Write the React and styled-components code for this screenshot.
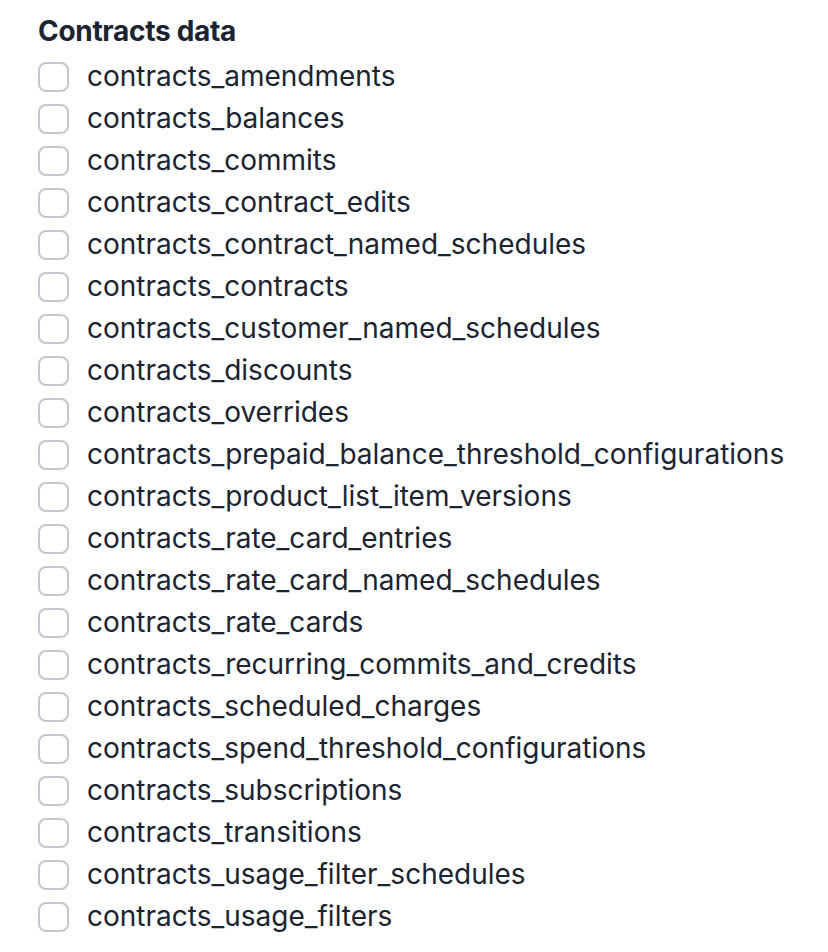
import React from "react";
import styled, { createGlobalStyle } from "styled-components";

const GlobalStyle = createGlobalStyle`
  body {
    margin: 0;
    background: #ffffff;
    font-family: Inter, "Noto Sans", sans-serif;
  }
`;

const Section = styled.section`
  padding: 15px 0 0 38px;
  display: flex;
  flex-direction: column;
  gap: 9px;
`;

const Title = styled.h2`
  margin: 0;
  font-size: 28px;
  line-height: 32px;
  font-weight: 700;
  color: #1c2331;
  letter-spacing: -0.3px;
`;

const List = styled.ul`
  margin: 0;
  padding: 0;
  list-style: none;
  display: flex;
  flex-direction: column;
`;

const Row = styled.li`
  height: 42px;
  display: flex;
  align-items: center;
  gap: 18px;
`;

const Box = styled.span`
  box-sizing: border-box;
  width: 31px;
  height: 30px;
  border: 2px solid #c4c8ce;
  border-radius: 8px;
  background: #ffffff;
  flex-shrink: 0;
`;

const Label = styled.span`
  font-size: 28px;
  line-height: 32px;
  color: #1c2331;
  white-space: nowrap;
  margin-top: -2px;
`;

const tables = [
  "contracts_amendments",
  "contracts_balances",
  "contracts_commits",
  "contracts_contract_edits",
  "contracts_contract_named_schedules",
  "contracts_contracts",
  "contracts_customer_named_schedules",
  "contracts_discounts",
  "contracts_overrides",
  "contracts_prepaid_balance_threshold_configurations",
  "contracts_product_list_item_versions",
  "contracts_rate_card_entries",
  "contracts_rate_card_named_schedules",
  "contracts_rate_cards",
  "contracts_recurring_commits_and_credits",
  "contracts_scheduled_charges",
  "contracts_spend_threshold_configurations",
  "contracts_subscriptions",
  "contracts_transitions",
  "contracts_usage_filter_schedules",
  "contracts_usage_filters",
];

export default function App() {
  return (
    <>
      <GlobalStyle />
      <Section>
        <Title>Contracts data</Title>
        <List>
          {tables.map((name) => (
            <Row key={name}>
              <Box />
              <Label>{name}</Label>
            </Row>
          ))}
        </List>
      </Section>
    </>
  );
}
